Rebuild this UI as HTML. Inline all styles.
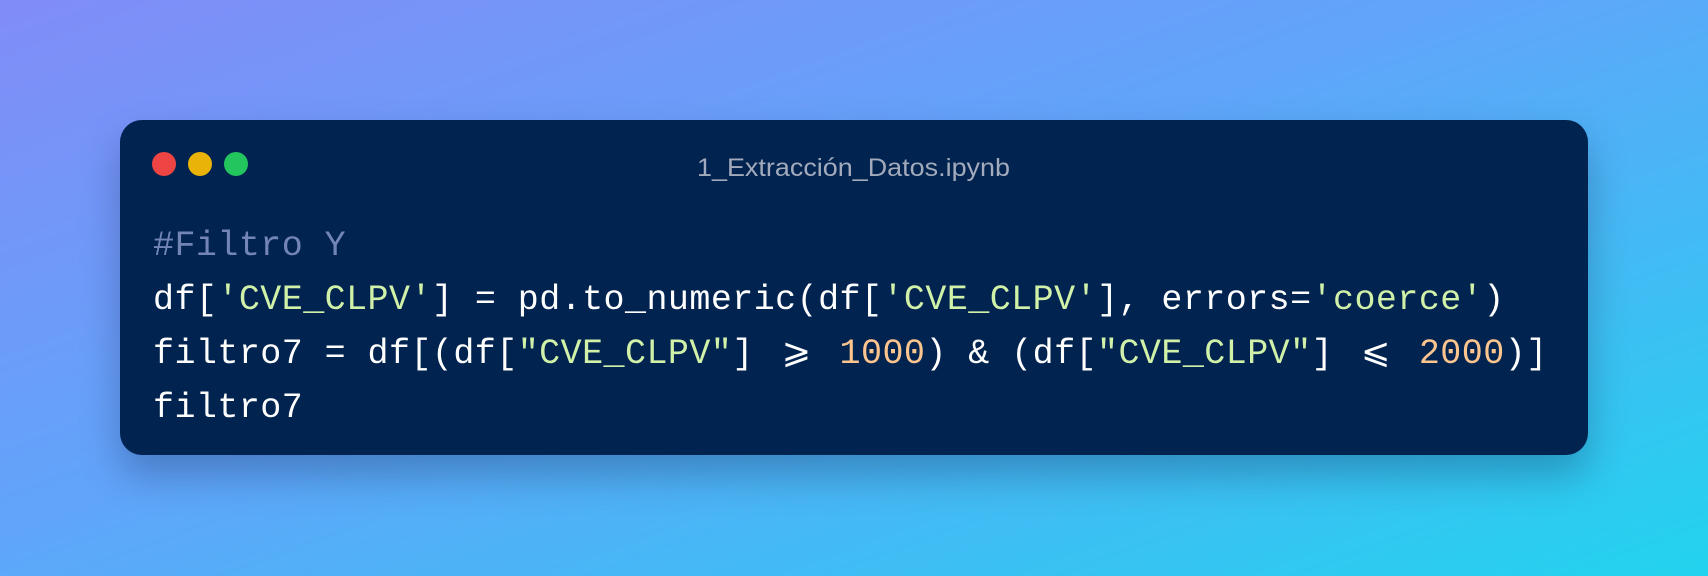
<!DOCTYPE html>
<html><head><meta charset="utf-8"><style>
html,body{margin:0;padding:0;width:1708px;height:576px;overflow:hidden}
body{background:linear-gradient(160deg,#818cf8 0%,#60a5fa 45%,#22d3ee 100%);position:relative;font-family:"Liberation Sans",sans-serif}
.card{position:absolute;left:120px;top:120px;width:1468px;height:335px;background:#002350;border-radius:22px;box-shadow:0 20px 40px rgba(0,0,40,0.25)}
.dot{position:absolute;top:32px;width:24px;height:24px;border-radius:50%}
.title{position:absolute;left:0;top:0}
.code{position:absolute;left:33px;top:9px;font-family:"Liberation Mono",monospace;font-size:35px;letter-spacing:0.45px;color:#fff;white-space:pre}
.l{position:absolute;left:0;line-height:1}
.c{color:#7285b5}.s{color:#d1f1a9}.n{color:#ffc58f}
.op{display:inline-block;width:42.9px;text-align:center}
</style></head><body>
<div class="card">
<div class="dot" style="left:32px;background:#ef4444"></div>
<div class="dot" style="left:68px;background:#eab308"></div>
<div class="dot" style="left:104px;background:#22c55e"></div>
<svg class="title" width="1468" height="80"><text x="577" y="56" font-family="Liberation Sans, sans-serif" font-size="25" fill="#a2aabb" textLength="313" lengthAdjust="spacingAndGlyphs">1_Extracción_Datos.ipynb</text></svg>
<div class="code">
<div class="l c" style="top:100px">#Filtro Y</div>
<div class="l" style="top:154px">df[<span class="s">'CVE_CLPV'</span>] = pd.to_numeric(df[<span class="s">'CVE_CLPV'</span>], errors=<span class="s">'coerce'</span>)</div>
<div class="l" style="top:208px">filtro7 = df[(df[<span class="s">"CVE_CLPV"</span>] <span class="op">⩾</span> <span class="n">1000</span>) &amp; (df[<span class="s">"CVE_CLPV"</span>] <span class="op">⩽</span> <span class="n">2000</span>)]</div>
<div class="l" style="top:262px">filtro7</div>
</div>
</div>
</body></html>
